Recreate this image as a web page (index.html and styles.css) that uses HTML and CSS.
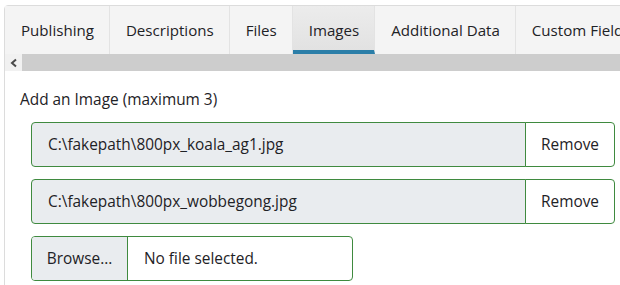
FILE: index.html
```html
<!DOCTYPE html>
<html>
<head>
<meta charset="utf-8">
<link rel="stylesheet" href="styles.css">
</head>
<body>
<div class="panel">
  <div class="tabs">
    <div class="tab">Publishing</div>
    <div class="tab">Descriptions</div>
    <div class="tab">Files</div>
    <div class="tab active">Images</div>
    <div class="tab">Additional Data</div>
    <div class="tab">Custom Fields</div>
  </div>
  <div class="scrollbar">
    <div class="arrow"><svg width="10" height="10" viewBox="0 0 10 10"><path d="M7 1.5 L3 5 L7 8.5" fill="none" stroke="#4a4a4a" stroke-width="2"/></svg></div>
    <div class="track"></div>
  </div>
  <div class="content">
    <div class="label">Add an Image (maximum 3)</div>
    <div class="group">
      <div class="field filled">C:\fakepath\800px_koala_ag1.jpg</div>
      <div class="btn">Remove</div>
    </div>
    <div class="group">
      <div class="field filled">C:\fakepath\800px_wobbegong.jpg</div>
      <div class="btn">Remove</div>
    </div>
    <div class="group browse-group">
      <div class="browse">Browse...</div>
      <div class="nofile">No file selected.</div>
    </div>
  </div>
</div>
</body>
</html>
```
FILE: styles.css
```css
* { box-sizing: border-box; }
body {
  margin: 0;
  font-family: "Open Sans", "Noto Sans", sans-serif;
  font-size: 15.4px;
  color: #1e2226;
  background: #fff;
  overflow: hidden;
}
.panel {
  margin: 5px 0 0 4px;
  width: 700px;
  height: 400px;
  border: 1px solid #dcdcdc;
  border-top-left-radius: 4px;
}
.tabs {
  display: flex;
  height: 48px;
  background: #f4f4f4;
  white-space: nowrap;
  font-size: 15.1px;
}
.tab {
  padding: 0 15px 0 16px;
  display: flex;
  align-items: center;
  height: 48px;
  border-right: 1px solid #e3e3e3;
  background: #f4f4f4;
}
.tab.active {
  background: linear-gradient(#ececec, #e2e2e2);
  border-bottom: 4px solid #2b7ea8;
  padding-top: 4px;
}
.scrollbar {
  display: flex;
  height: 17px;
  background: #cdcdcd;
}
.arrow {
  width: 17px;
  background: #f1f1f1;
  display: flex;
  align-items: center;
  justify-content: center;
}
.track { flex: 1; }
.content {
  padding: 18px 0 0 15px;
}
.label {
  height: 33px;
  line-height: 22px;
}
.group {
  display: flex;
  height: 45px;
  margin: 0 0 12px 11px;
  width: 584px;
}
.field {
  flex: 1;
  display: flex;
  align-items: center;
  padding-left: 16px;
  background: #e9ecef;
  border: 1px solid #3f8a3f;
  border-radius: 4px 0 0 4px;
}
.btn {
  width: 90px;
  display: flex;
  align-items: center;
  justify-content: center;
  border: 1px solid #3f8a3f;
  border-radius: 0 4px 4px 0;
  margin-left: -1px;
  background: #fff;
}
.browse-group {
  width: 322px;
  border: 1px solid #3f8a3f;
  border-radius: 4px;
}
.browse {
  width: 96px;
  background: #e9ecef;
  border-right: 1px solid #3f8a3f;
  display: flex;
  align-items: center;
  justify-content: center;
  border-radius: 3px 0 0 3px;
}
.nofile {
  display: flex;
  align-items: center;
  padding-left: 16px;
}
```
